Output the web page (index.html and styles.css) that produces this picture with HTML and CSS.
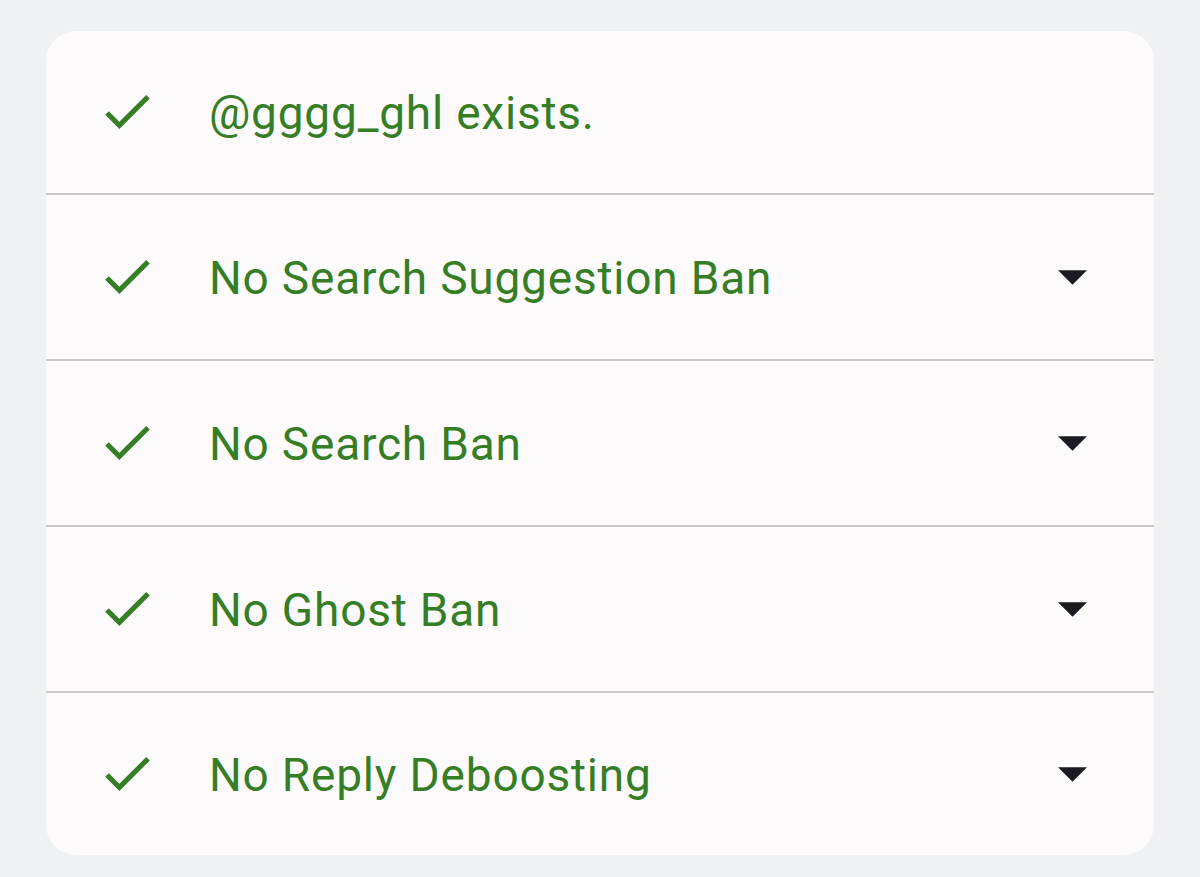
FILE: index.html
```html
<!DOCTYPE html>
<html lang="en">
<head>
<meta charset="utf-8">
<title>Ban check</title>
<link rel="stylesheet" href="styles.css">
</head>
<body>
<div class="card">
  <div class="row row-first">
    <svg class="check" viewBox="3.41 5.59 17.59 13.41" aria-hidden="true"><path d="M9 16.17L4.83 12l-1.42 1.41L9 19 21 7l-1.41-1.41z"/></svg>
    <span class="label">@gggg_ghl exists.</span>
  </div>
  <div class="row">
    <svg class="check" viewBox="3.41 5.59 17.59 13.41" aria-hidden="true"><path d="M9 16.17L4.83 12l-1.42 1.41L9 19 21 7l-1.41-1.41z"/></svg>
    <span class="label">No Search Suggestion Ban</span>
    <svg class="caret" viewBox="7 10 10 5" aria-hidden="true"><path d="M7 10l5 5 5-5z"/></svg>
  </div>
  <div class="row">
    <svg class="check" viewBox="3.41 5.59 17.59 13.41" aria-hidden="true"><path d="M9 16.17L4.83 12l-1.42 1.41L9 19 21 7l-1.41-1.41z"/></svg>
    <span class="label">No Search Ban</span>
    <svg class="caret" viewBox="7 10 10 5" aria-hidden="true"><path d="M7 10l5 5 5-5z"/></svg>
  </div>
  <div class="row">
    <svg class="check" viewBox="3.41 5.59 17.59 13.41" aria-hidden="true"><path d="M9 16.17L4.83 12l-1.42 1.41L9 19 21 7l-1.41-1.41z"/></svg>
    <span class="label">No Ghost Ban</span>
    <svg class="caret" viewBox="7 10 10 5" aria-hidden="true"><path d="M7 10l5 5 5-5z"/></svg>
  </div>
  <div class="row row-last">
    <svg class="check" viewBox="3.41 5.59 17.59 13.41" aria-hidden="true"><path d="M9 16.17L4.83 12l-1.42 1.41L9 19 21 7l-1.41-1.41z"/></svg>
    <span class="label">No Reply Deboosting</span>
    <svg class="caret" viewBox="7 10 10 5" aria-hidden="true"><path d="M7 10l5 5 5-5z"/></svg>
  </div>
</div>
</body>
</html>
```
FILE: styles.css
```css
html, body {
  margin: 0;
  padding: 0;
  background: #f0f1f3;
}
body {
  padding: 31px 46px 22px 46px;
  font-family: Roboto, "Noto Sans", sans-serif;
}
.card {
  background: #fcfafb;
  border-radius: 30px;
  overflow: hidden;
  display: flex;
  flex-direction: column;
}
.row {
  height: 164px;
  display: flex;
  align-items: center;
  padding: 0 67px 0 58px;
  border-top: 2px solid #c8c7cc;
}
.row-first {
  height: 162px;
  border-top: none;
}
.row-last {
  height: 162px;
}
.check {
  width: 47px;
  height: 34px;
  fill: #367e26;
  flex: none;
}
.label {
  margin-left: 58px;
  flex: 1;
  color: #367e26;
  font-size: 46px;
  letter-spacing: 0.8px;
  padding-top: 2px;
}
.caret {
  width: 29px;
  height: 15px;
  fill: #1c1b1f;
  flex: none;
}
```
